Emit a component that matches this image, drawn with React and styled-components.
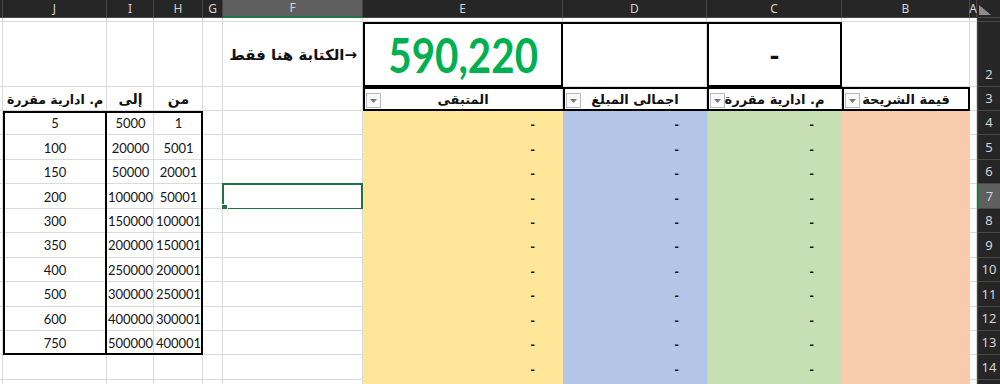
import React from "react";
import styled, { createGlobalStyle } from "styled-components";

// Column widths, left to right on screen: K (sliver), J, I, H, G, F, E, D, C, B, A, row headers
const COLS = [3, 104, 47, 49, 20, 140, 200, 144, 135, 128, 7, 23];
const TEMPLATE = COLS.map((w) => `${w}px`).join(" ");

const GRID = "#dadada";
const CHROME = "#262626";
const CHROME_LINE = "#474747";
const CHROME_TEXT = "#d4d4d4";
const ACTIVE_CHROME = "#5f5f5f";
const EXCEL_GREEN = "#217346";

const FILL = {
  B: "#f8cbad",
  C: "#c6e0b4",
  D: "#b4c6e7",
  E: "#ffe699",
};

const ARABIC = `"DejaVu Sans", "Noto Sans", sans-serif`;
const NUMERIC = `Lato, "Liberation Sans", sans-serif`;

const Global = createGlobalStyle`
  html, body {
    margin: 0;
    padding: 0;
    background: #ffffff;
    overflow: hidden;
  }
  body {
    font-family: ${NUMERIC};
  }
`;

const Sheet = styled.div`
  width: 1000px;
  height: 384px;
  overflow: hidden;
  background: #ffffff;
`;

const Row = styled.div`
  display: grid;
  grid-template-columns: ${TEMPLATE};
  height: ${(p) => p.$h}px;
`;

// inset shadows: thick borders first (painted on top), gridline last
const edgeShadow = ({ $t, $r, $b, $l, $fill, $noGrid }) => {
  const list = [];
  if ($t) list.push("inset 0 2px 0 #000");
  if ($r) list.push("inset -2px 0 0 #000");
  if ($b) list.push("inset 0 -2px 0 #000");
  if ($l) list.push("inset 2px 0 0 #000");
  if (!$noGrid) list.push(`inset -1px -1px 0 ${$fill || GRID}`);
  return list.length ? list.join(", ") : "none";
};

const Cell = styled.div`
  position: relative;
  min-width: 0;
  display: flex;
  align-items: ${(p) => p.$v || "center"};
  justify-content: ${(p) => p.$align || "center"};
  padding: ${(p) => p.$pad || "0"};
  box-sizing: border-box;
  background: ${(p) => p.$fill || "#ffffff"};
  box-shadow: ${edgeShadow};
  font-family: ${NUMERIC};
  font-size: 13px;
  color: #161616;
  white-space: nowrap;
`;

const ColHead = styled.div`
  display: flex;
  align-items: center;
  justify-content: center;
  box-sizing: border-box;
  background: ${(p) => (p.$active ? ACTIVE_CHROME : CHROME)};
  border-right: 1px solid ${CHROME_LINE};
  border-bottom: ${(p) => (p.$active ? `2px solid ${EXCEL_GREEN}` : `1px solid ${CHROME_LINE}`)};
  color: ${CHROME_TEXT};
  font-family: "Noto Sans", "Open Sans", sans-serif;
  font-size: 12px;
  line-height: 1;
`;

const Corner = styled.div`
  background: ${CHROME};
  border-bottom: 1px solid ${CHROME_LINE};
  box-sizing: border-box;
  display: flex;
  align-items: flex-start;
  padding: 4px 0 0 1px;
`;

const RowHead = styled.div`
  display: flex;
  align-items: flex-end;
  justify-content: center;
  box-sizing: border-box;
  padding-bottom: ${(p) => p.$pb ?? 5}px;
  overflow: hidden;
  background: ${(p) => (p.$active ? ACTIVE_CHROME : CHROME)};
  border-bottom: 1px solid ${CHROME_LINE};
  border-left: ${(p) => (p.$active ? `2px solid ${EXCEL_GREEN}` : `1px solid ${CHROME_LINE}`)};
  color: ${CHROME_TEXT};
  font-family: "Noto Sans", "Open Sans", sans-serif;
  font-size: 13px;
  line-height: 14px;
`;

const Label = styled.span`
  font-family: ${ARABIC};
  font-weight: 700;
  font-size: ${(p) => p.$size || 13}px;
  direction: rtl;
  color: #111;
`;

const Total = styled.span`
  display: inline-block;
  font-family: ${NUMERIC};
  font-weight: 700;
  font-size: 48px;
  line-height: 1;
  color: #00b050;
  transform: scaleX(0.84);
`;

const Dash = styled.span`
  font-family: ${NUMERIC};
  font-weight: 900;
  font-size: ${(p) => p.$size || 13}px;
  line-height: 1;
  color: #111;
`;

const FilterButton = styled.span`
  position: absolute;
  left: 3px;
  bottom: 3px;
  width: 15px;
  height: 15px;
  box-sizing: border-box;
  border: 1px solid #b9b9b9;
  background: #fafafa;
  display: flex;
  align-items: center;
  justify-content: center;
`;

const Selection = styled.div`
  position: absolute;
  inset: -1px 0 -1px -1px;
  border: 2px solid ${EXCEL_GREEN};
  pointer-events: none;
`;

const FillHandle = styled.div`
  position: absolute;
  left: -3px;
  bottom: -3px;
  width: 5px;
  height: 5px;
  background: ${EXCEL_GREEN};
  border: 1px solid #ffffff;
`;

const SelectAll = () => (
  <svg width="14" height="12" viewBox="0 0 14 12">
    <polygon points="1,1 1,11 13,11" fill="#8c8c8c" />
  </svg>
);

const DropArrow = () => (
  <svg width="9" height="6" viewBox="0 0 9 6">
    <polygon points="1,1 8,1 4.5,5" fill="#7a7a7a" />
  </svg>
);

const Blank = (props) => <Cell {...props} />;

const FilterCell = ({ title, ...rest }) => (
  <Cell $t $b $l {...rest}>
    <FilterButton>
      <DropArrow />
    </FilterButton>
    <Label>{title}</Label>
  </Cell>
);

const TIERS = [
  [5, 5000, 1],
  [100, 20000, 5001],
  [150, 50000, 20001],
  [200, 100000, 50001],
  [300, 150000, 100001],
  [350, 200000, 150001],
  [400, 250000, 200001],
  [500, 300000, 250001],
  [600, 400000, 300001],
  [750, 500000, 400001],
];

const LETTERS = ["", "J", "I", "H", "G", "F", "E", "D", "C", "B", "A"];

const BODY_H = 24.45;

const AmountCell = ({ col }) => (
  <Cell $fill={FILL[col]} $align="flex-end" $pad="3px 28px 0 0">
    <Dash>-</Dash>
  </Cell>
);

const BodyRow = ({ n }) => {
  const tier = TIERS[n - 4];
  const first = n === 4;
  const last = n === 13;
  const active = n === 7;
  return (
    <Row $h={BODY_H}>
      <Blank />
      {tier ? (
        <>
          <Cell $l $r $t={first} $b={last}>{tier[0]}</Cell>
          <Cell $t={first} $b={last}>{tier[1]}</Cell>
          <Cell $r $t={first} $b={last}>{tier[2]}</Cell>
        </>
      ) : (
        <>
          <Blank />
          <Blank />
          <Blank />
        </>
      )}
      <Blank />
      <Cell>
        {active && (
          <Selection>
            <FillHandle />
          </Selection>
        )}
      </Cell>
      <AmountCell col="E" />
      <AmountCell col="D" />
      <AmountCell col="C" />
      <Cell $fill={FILL.B} />
      <Blank />
      <RowHead $active={active}>{n}</RowHead>
    </Row>
  );
};

export default function App() {
  const bodyRows = [];
  for (let n = 4; n <= 14; n += 1) bodyRows.push(<BodyRow key={n} n={n} />);

  return (
    <Sheet>
      <Global />

      <Row $h={18}>
        {LETTERS.map((l, i) => (
          <ColHead key={i} $active={l === "F"}>
            {l}
          </ColHead>
        ))}
        <Corner>
          <SelectAll />
        </Corner>
      </Row>

      <Row $h={4}>
        {LETTERS.map((l, i) => (
          <Blank key={i} />
        ))}
        <RowHead $pb={0} />
      </Row>

      <Row $h={65}>
        <Blank />
        <Blank />
        <Blank />
        <Blank />
        <Blank />
        <Cell $align="flex-end" $pad="0 6px 0 0">
          <Label $size={15}>→الكتابة هنا فقط</Label>
        </Cell>
        <Cell $t $b $l $r>
          <Total>590,220</Total>
        </Cell>
        <Cell $t />
        <Cell $t $b $l $r>
          <Dash $size={28}>-</Dash>
        </Cell>
        <Blank />
        <Blank />
        <RowHead>2</RowHead>
      </Row>

      <Row $h={24}>
        <Blank />
        <Cell $v="flex-end" $pad="0 0 4px 0">
          <Label $size={12.5}>م. ادارية مقررة</Label>
        </Cell>
        <Cell $v="flex-end" $pad="0 0 4px 0">
          <Label $size={14}>إلى</Label>
        </Cell>
        <Cell $v="flex-end" $pad="0 0 4px 0">
          <Label $size={14}>من</Label>
        </Cell>
        <Blank />
        <Blank />
        <FilterCell title="المتبقى" />
        <FilterCell title="اجمالى المبلغ" />
        <FilterCell title="م. ادارية مقررة" />
        <FilterCell title="قيمة الشريحة" $r />
        <Blank />
        <RowHead>3</RowHead>
      </Row>

      {bodyRows}
      <Row $h={BODY_H}>
        <Blank />
        <Blank />
        <Blank />
        <Blank />
        <Blank />
        <Blank />
        <Cell $fill={FILL.E} />
        <Cell $fill={FILL.D} />
        <Cell $fill={FILL.C} />
        <Cell $fill={FILL.B} />
        <Blank />
        <RowHead />
      </Row>
    </Sheet>
  );
}
